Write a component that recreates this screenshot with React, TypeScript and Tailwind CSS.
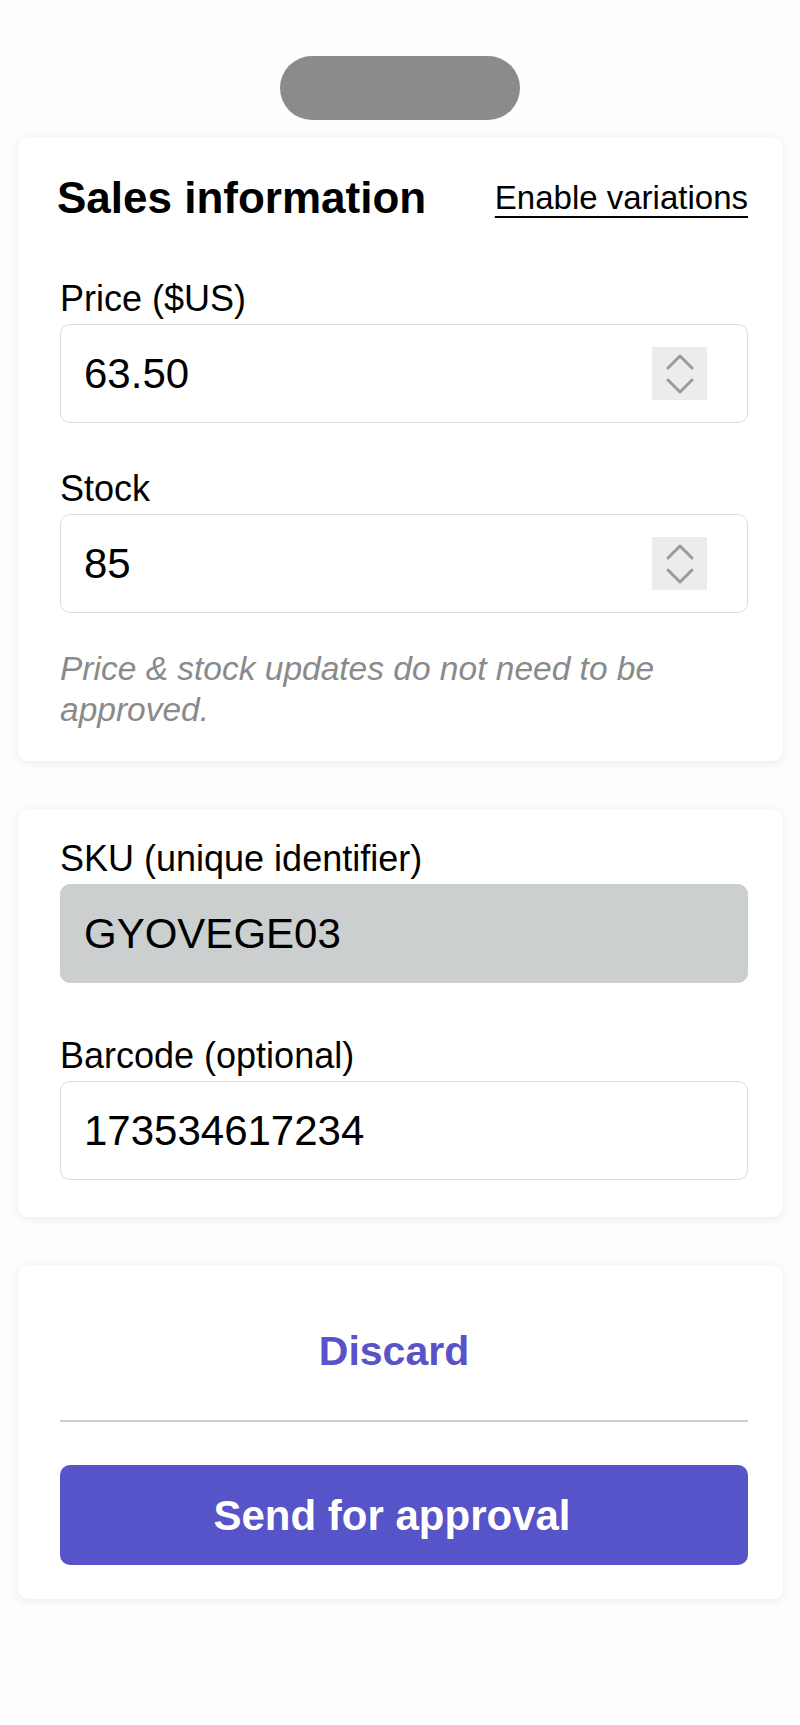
import { useState } from 'react';

const font = { fontFamily: '"Liberation Sans", Arial, Helvetica, sans-serif' };

function Stepper() {
  return (
    <div className="w-[55px] h-[53px] bg-[#ececec] flex items-center justify-center shrink-0">
      <svg width="30" height="44" viewBox="0 0 30 44" fill="none" stroke="#9b9b9b" strokeWidth="3" strokeLinecap="round" strokeLinejoin="round">
        <path d="M3 16 L15 4 L27 16" />
        <path d="M3 28 L15 40 L27 28" />
      </svg>
    </div>
  );
}

function Field({
  label,
  value,
  onChange,
  stepper,
  disabled,
}: {
  label: string;
  value: string;
  onChange?: (v: string) => void;
  stepper?: boolean;
  disabled?: boolean;
}) {
  return (
    <div>
      <label className="block text-[36px] leading-[40px] text-black mb-[5px]">{label}</label>
      <div
        className={`h-[99px] rounded-[10px] flex items-center pl-[23px] pr-[40px] ${
          disabled ? 'bg-[#cbcfcf] border-[1.5px] border-[#cbcfcf]' : 'bg-white border-[1.5px] border-[#dcdcdc]'
        }`}
      >
        <input
          className="flex-1 min-w-0 bg-transparent outline-none text-[42px] text-black"
          style={font}
          value={value}
          readOnly={disabled}
          onChange={e => onChange?.(e.target.value)}
        />
        {stepper && <Stepper />}
      </div>
    </div>
  );
}

export default function App() {
  const [price, setPrice] = useState('63.50');
  const [stock, setStock] = useState('85');
  const [barcode, setBarcode] = useState('173534617234');

  const card = 'ml-[18px] mr-[17px] bg-white rounded-[10px] shadow-[0_2px_10px_rgba(0,0,0,0.07)] pl-[42px] pr-[35px]';

  return (
    <div className="min-h-[1725px] bg-[#fdfdfd] pt-[56px] pb-[120px]" style={font}>
      {/* Drag handle */}
      <div className="mx-auto w-[240px] h-[64px] rounded-full bg-[#8b8b8b]" />

      {/* Sales information */}
      <div className={`${card} mt-[17px] pt-[35px] pb-[31px]`}>
        <div className="flex items-center justify-between h-[52px]">
          <h2 className="text-[44px] leading-[52px] font-bold text-black -ml-[3px]">Sales information</h2>
          <a href="#" className="text-[33px] leading-[40px] text-black underline decoration-2 underline-offset-[7px]">
            Enable variations
          </a>
        </div>
        <div className="mt-[55px]">
          <Field label="Price ($US)" value={price} onChange={setPrice} stepper />
        </div>
        <div className="mt-[46px]">
          <Field label="Stock" value={stock} onChange={setStock} stepper />
        </div>
        <p className="mt-[35px] text-[33.5px] leading-[41px] italic text-[#8a8a8a]">
          Price &amp; stock updates do not need to be approved.
        </p>
      </div>

      {/* Identifiers */}
      <div className={`${card} mt-[48px] pt-[30px] pb-[37px]`}>
        <Field label="SKU (unique identifier)" value="GYOVEGE03" disabled />
        <div className="mt-[53px]">
          <Field label="Barcode (optional)" value={barcode} onChange={setBarcode} />
        </div>
      </div>

      {/* Actions */}
      <div className={`${card} mt-[48px] pt-[62px] pb-[34px]`}>
        <button className="block w-full text-center pr-[20px] text-[41px] leading-[48px] font-bold text-[#5a52c8]">Discard</button>
        <div className="mt-[45px] h-[2px] bg-[#cfcfcf]" />
        <button className="mt-[43px] w-full h-[100px] rounded-[10px] bg-[#5753c9] pr-[24px] text-white text-[42px] font-bold">
          Send for approval
        </button>
      </div>
    </div>
  );
}
